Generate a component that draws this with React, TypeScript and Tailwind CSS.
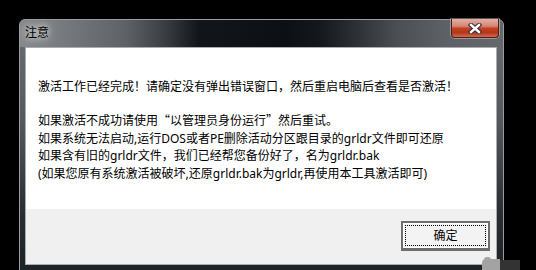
import { X } from 'lucide-react'

// Win7 Aero style message box
const LINES = [
  '如果系统无法启动,运行DOS或者PE删除活动分区跟目录的grldr文件即可还原',
  '如果含有旧的grldr文件，我们已经帮您备份好了，名为grldr.bak',
  '(如果您原有系统激活被破坏,还原grldr.bak为grldr,再使用本工具激活即可)',
]

function CloseGlyph() {
  return (
    <svg width="14" height="11" viewBox="0 0 14 11">
      <path d="M3 2 L11 9 M11 2 L3 9" stroke="#2b2d3a" strokeWidth="4.4" strokeLinecap="square" fill="none" />
      <path d="M3 2 L11 9 M11 2 L3 9" stroke="#ffffff" strokeWidth="2.4" strokeLinecap="square" fill="none" />
    </svg>
  )
}

export default function App() {
  return (
    <div className="relative w-[536px] h-[270px] overflow-hidden bg-black [font-family:'Noto_Sans','Noto_Sans_CJK_SC',sans-serif] text-[12px] text-black">
      {/* Window frame */}
      <div className="relative ml-[19px] mt-[19px] flex h-[260px] w-[485px] flex-col rounded-t-[6px] border border-[#9a9da0] bg-[linear-gradient(180deg,#6c6f73_0%,#54575b_40%,#2a2e33_75%,#1c2126_100%)]">
        {/* Title bar */}
        <div className="flex h-[27px] items-center rounded-t-[5px] pb-[1px] pl-[5px] bg-[linear-gradient(90deg,#878a8d_0%,#76797d_9%,#5e6165_22%,#3a3d42_30%,#12161b_37%,#0c1015_55%,#14181d_62%,#2e3136_70%,#4b4e52_78%,#5d6064_88%,#65686b_100%)]">
          <span className="[text-shadow:0_0_6px_rgba(255,255,255,0.95),0_0_12px_rgba(255,255,255,0.7)]">注意</span>
        </div>

        {/* Close button */}
        <div className="absolute top-[-1px] right-[4px] flex h-[19px] w-[48px] items-center justify-center rounded-b-[4px] border border-t-0 border-[#4d1f18] bg-[linear-gradient(180deg,#e4b0a4_0%,#d38575_40%,#c4401f_52%,#b5361b_75%,#cf6a4f_100%)] shadow-[0_0_0_1px_rgba(255,255,255,0.35)]">
          <CloseGlyph />
        </div>

        {/* Body */}
        <div className="flex flex-1 pl-[5px]">
          <div className="flex h-[218px] w-[472px] flex-col border border-[#a9adb1]">
            <div className="h-[161px] bg-white pl-[12px] pt-[30px] leading-[17.4px]">
              <p>激活工作已经完成！请确定没有弹出错误窗口，然后重启电脑后查看是否激活！</p>
              <div className="mt-[16px]">
                <p>
                  如果激活不成功请使用<span className="[font-family:'Noto_Sans_CJK_SC',sans-serif]">“</span>以管理员身份运行<span className="[font-family:'Noto_Sans_CJK_SC',sans-serif]">”</span>然后重试。
                </p>
                {LINES.map((line, i) => (
                  <p key={i}>{line}</p>
                ))}
              </div>
            </div>
            <div className="flex h-[55px] justify-end bg-[#f0f0f0] pr-[6px] pt-[12px]">
              <button className="flex h-[30px] w-[89px] border-2 border-b-[3px] border-[#6e6e6e] bg-[#f3f3f3]">
                <div className="flex flex-1 border border-white p-[1px]">
                  <div className="flex flex-1 items-center justify-center border border-dotted border-black">
                    确定
                  </div>
                </div>
              </button>
            </div>
          </div>
        </div>
      </div>

      {/* Mouse cursor remnant, bottom right */}
      <div className="absolute left-[482px] top-[259px] h-[11px] w-[18px] rounded-tl-[4px] bg-[#a3a3a3]" />
      <div className="absolute left-[484px] top-[257px] h-[4px] w-[7px] rounded-t-[3px] bg-[#a3a3a3]" />
      <div className="absolute left-[500px] top-[260px] h-[10px] w-[20px] bg-[#333333]" />
      <span className="hidden"><X /></span>
    </div>
  )
}
